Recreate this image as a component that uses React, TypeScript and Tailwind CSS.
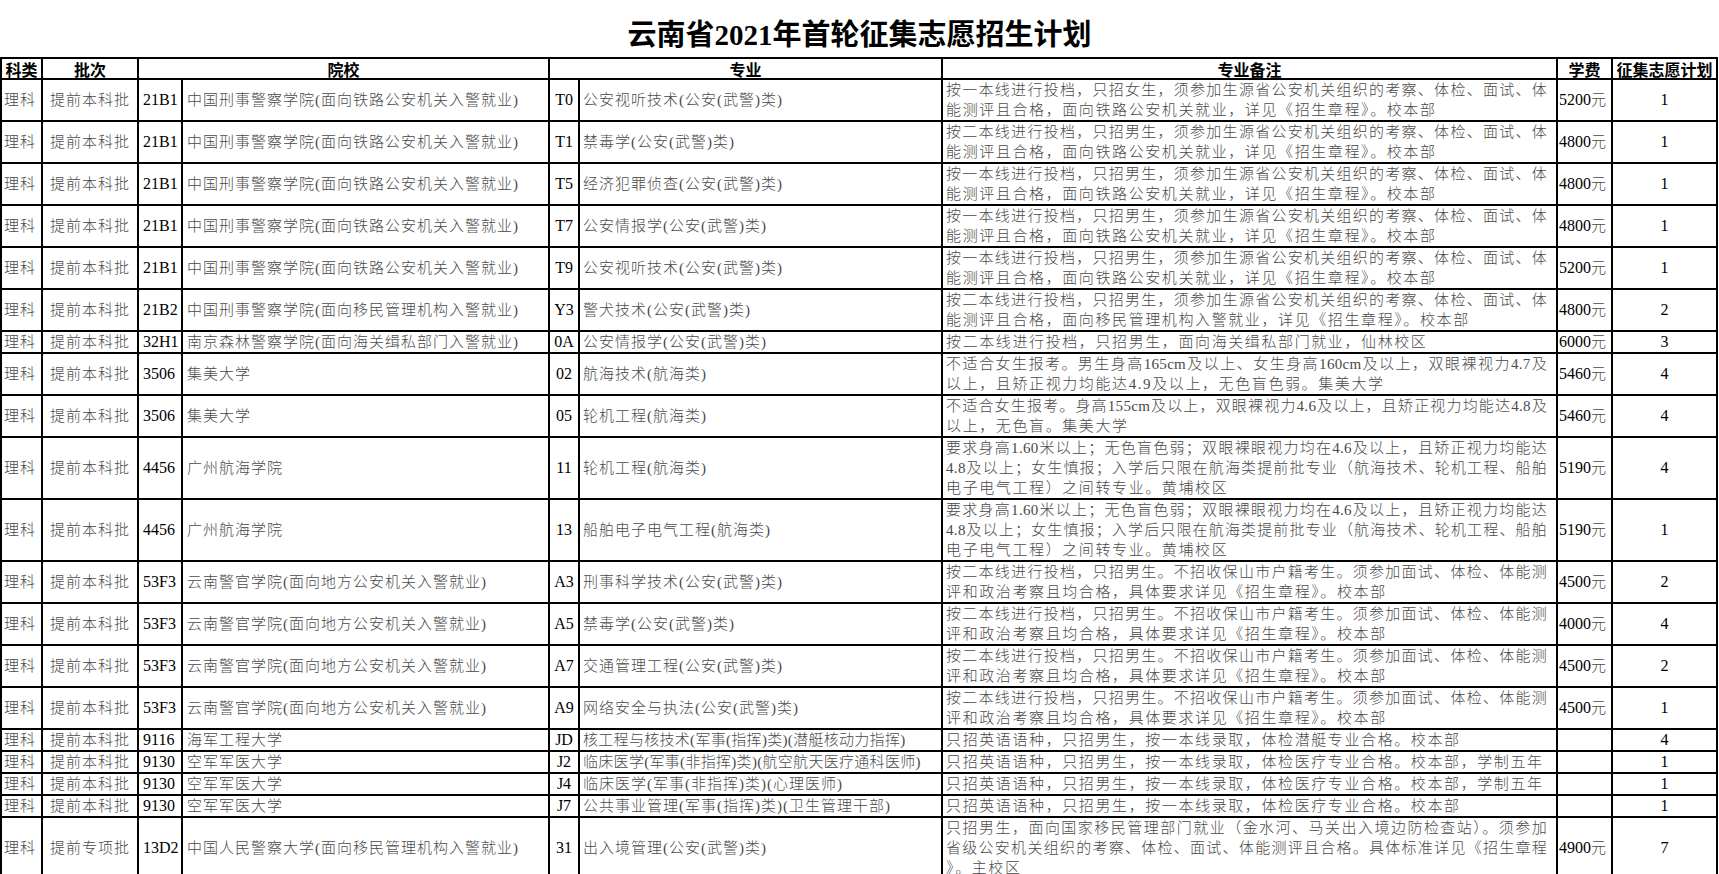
import React from "react"

type PlanRow = {
  batch: string
  code: string
  school: string
  mcode: string
  major: string
  notes: string[]
  fee: string
  plan: string
}

const N_ONE_F =
  "按一本线进行投档，只招女生，须参加生源省公安机关组织的考察、体检、面试、体"
const N_ONE_M =
  "按一本线进行投档，只招男生，须参加生源省公安机关组织的考察、体检、面试、体"
const N_TWO_M =
  "按二本线进行投档，只招男生，须参加生源省公安机关组织的考察、体检、面试、体"
const N_RAIL = "能测评且合格，面向铁路公安机关就业，详见《招生章程》。校本部"
const N_YN = [
  "按二本线进行投档，只招男生。不招收保山市户籍考生。须参加面试、体检、体能测",
  "评和政治考察且均合格，具体要求详见《招生章程》。校本部",
]
const N_GZ = [
  "要求身高1.60米以上；无色盲色弱；双眼裸眼视力均在4.6及以上，且矫正视力均能达",
  "4.8及以上；女生慎报；入学后只限在航海类提前批专业（航海技术、轮机工程、船舶",
  "电子电气工程）之间转专业。黄埔校区",
]

const CJ = "中国刑事警察学院(面向铁路公安机关入警就业)"
const YN = "云南警官学院(面向地方公安机关入警就业)"

const ROWS: PlanRow[] = [
  { batch: "提前本科批", code: "21B1", school: CJ, mcode: "T0", major: "公安视听技术(公安(武警)类)", notes: [N_ONE_F, N_RAIL], fee: "5200", plan: "1" },
  { batch: "提前本科批", code: "21B1", school: CJ, mcode: "T1", major: "禁毒学(公安(武警)类)", notes: [N_TWO_M, N_RAIL], fee: "4800", plan: "1" },
  { batch: "提前本科批", code: "21B1", school: CJ, mcode: "T5", major: "经济犯罪侦查(公安(武警)类)", notes: [N_ONE_M, N_RAIL], fee: "4800", plan: "1" },
  { batch: "提前本科批", code: "21B1", school: CJ, mcode: "T7", major: "公安情报学(公安(武警)类)", notes: [N_ONE_M, N_RAIL], fee: "4800", plan: "1" },
  { batch: "提前本科批", code: "21B1", school: CJ, mcode: "T9", major: "公安视听技术(公安(武警)类)", notes: [N_ONE_M, N_RAIL], fee: "5200", plan: "1" },
  {
    batch: "提前本科批", code: "21B2", school: "中国刑事警察学院(面向移民管理机构入警就业)", mcode: "Y3", major: "警犬技术(公安(武警)类)",
    notes: [N_TWO_M, "能测评且合格，面向移民管理机构入警就业，详见《招生章程》。校本部"], fee: "4800", plan: "2",
  },
  {
    batch: "提前本科批", code: "32H1", school: "南京森林警察学院(面向海关缉私部门入警就业)", mcode: "0A", major: "公安情报学(公安(武警)类)",
    notes: ["按二本线进行投档，只招男生，面向海关缉私部门就业，仙林校区"], fee: "6000", plan: "3",
  },
  {
    batch: "提前本科批", code: "3506", school: "集美大学", mcode: "02", major: "航海技术(航海类)",
    notes: [
      "不适合女生报考。男生身高165cm及以上、女生身高160cm及以上，双眼裸视力4.7及",
      "以上，且矫正视力均能达4.9及以上，无色盲色弱。集美大学",
    ],
    fee: "5460", plan: "4",
  },
  {
    batch: "提前本科批", code: "3506", school: "集美大学", mcode: "05", major: "轮机工程(航海类)",
    notes: ["不适合女生报考。身高155cm及以上，双眼裸视力4.6及以上，且矫正视力均能达4.8及", "以上，无色盲。集美大学"],
    fee: "5460", plan: "4",
  },
  { batch: "提前本科批", code: "4456", school: "广州航海学院", mcode: "11", major: "轮机工程(航海类)", notes: N_GZ, fee: "5190", plan: "4" },
  { batch: "提前本科批", code: "4456", school: "广州航海学院", mcode: "13", major: "船舶电子电气工程(航海类)", notes: N_GZ, fee: "5190", plan: "1" },
  { batch: "提前本科批", code: "53F3", school: YN, mcode: "A3", major: "刑事科学技术(公安(武警)类)", notes: N_YN, fee: "4500", plan: "2" },
  { batch: "提前本科批", code: "53F3", school: YN, mcode: "A5", major: "禁毒学(公安(武警)类)", notes: N_YN, fee: "4000", plan: "4" },
  { batch: "提前本科批", code: "53F3", school: YN, mcode: "A7", major: "交通管理工程(公安(武警)类)", notes: N_YN, fee: "4500", plan: "2" },
  { batch: "提前本科批", code: "53F3", school: YN, mcode: "A9", major: "网络安全与执法(公安(武警)类)", notes: N_YN, fee: "4500", plan: "1" },
  {
    batch: "提前本科批", code: "9116", school: "海军工程大学", mcode: "JD", major: "核工程与核技术(军事(指挥)类)(潜艇核动力指挥)",
    notes: ["只招英语语种，只招男生，按一本线录取，体检潜艇专业合格。校本部"], fee: "", plan: "4",
  },
  {
    batch: "提前本科批", code: "9130", school: "空军军医大学", mcode: "J2", major: "临床医学(军事(非指挥)类)(航空航天医疗通科医师)",
    notes: ["只招英语语种，只招男生，按一本线录取，体检医疗专业合格。校本部，学制五年"], fee: "", plan: "1",
  },
  {
    batch: "提前本科批", code: "9130", school: "空军军医大学", mcode: "J4", major: "临床医学(军事(非指挥)类)(心理医师)",
    notes: ["只招英语语种，只招男生，按一本线录取，体检医疗专业合格。校本部，学制五年"], fee: "", plan: "1",
  },
  {
    batch: "提前本科批", code: "9130", school: "空军军医大学", mcode: "J7", major: "公共事业管理(军事(指挥)类)(卫生管理干部)",
    notes: ["只招英语语种，只招男生，按一本线录取，体检医疗专业合格。校本部"], fee: "", plan: "1",
  },
  {
    batch: "提前专项批", code: "13D2", school: "中国人民警察大学(面向移民管理机构入警就业)", mcode: "31", major: "出入境管理(公安(武警)类)",
    notes: [
      "只招男生，面向国家移民管理部门就业（金水河、马关出入境边防检查站）。须参加",
      "省级公安机关组织的考察、体检、面试、体能测评且合格。具体标准详见《招生章程",
      "》。主校区",
    ],
    fee: "4900", plan: "7",
  },
]

const ROW_H = ["h-[21px]", "h-[21px]", "h-[42px]", "h-[62px]"]

const cell = "border-2 border-black whitespace-nowrap overflow-hidden"
const head = "border-2 border-black text-center font-['Noto_Sans_CJK_SC',sans-serif] font-bold text-[16px] leading-[18px] text-black"

export default function App() {
  return (
    <div className="w-[1719px] bg-white font-['Liberation_Serif','Noto_Sans_CJK_SC',serif] text-[#4a4a4a]">
      <div className="h-[57px] pt-[19px] text-center text-[29px] leading-[32px] font-bold text-black">
        云南省2021年首轮征集志愿招生计划
      </div>
      <table className="table-fixed border-collapse w-[1716px] border-2 border-black">
        <colgroup>
          <col className="w-[41px]" />
          <col className="w-[96px]" />
          <col className="w-[44px]" />
          <col className="w-[367px]" />
          <col className="w-[30px]" />
          <col className="w-[363px]" />
          <col className="w-[615px]" />
          <col className="w-[55px]" />
          <col className="w-[105px]" />
        </colgroup>
        <thead>
          <tr className="h-[21px]">
            <th className={head}>科类</th>
            <th className={head}>批次</th>
            <th className={head} colSpan={2}>院校</th>
            <th className={head} colSpan={2}>专业</th>
            <th className={head}>专业备注</th>
            <th className={head}>学费</th>
            <th className={head}>征集志愿计划</th>
          </tr>
        </thead>
        <tbody className="text-[15px] leading-[20px] font-light">
          {ROWS.map((r, i) => (
            <tr key={i} className={ROW_H[r.notes.length]}>
              <td className={`${cell} pl-[2px] tracking-[1px]`}>理科</td>
              <td className={`${cell} text-center tracking-[1px]`}>{r.batch}</td>
              <td className={`${cell} pl-[4px] text-[16px] text-black font-normal`}>{r.code}</td>
              <td className={`${cell} pl-[4px] tracking-[1px]`}>{r.school}</td>
              <td className={`${cell} text-center text-[16px] text-black font-normal`}>{r.mcode}</td>
              <td className={`${cell} pl-[3px] ${r.major.length > 24 ? "tracking-[0.3px]" : "tracking-[1px]"}`}>{r.major}</td>
              <td className={`${cell} pl-[3px] pr-[9px]`}>
                {r.notes.map((line, j) =>
                  j < r.notes.length - 1 ? (
                    <div key={j} className="text-justify [text-align-last:justify] tracking-[0.3px]">
                      {line}
                    </div>
                  ) : (
                    <div key={j} className="tracking-[1.6px]">
                      {line}
                    </div>
                  )
                )}
              </td>
              <td className={`${cell} pl-[1px]`}>
                {r.fee && (
                  <>
                    <span className="text-[16px] text-black font-normal">{r.fee}</span>元
                  </>
                )}
              </td>
              <td className={`${cell} text-center text-[16px] text-black font-normal`}>{r.plan}</td>
            </tr>
          ))}
        </tbody>
      </table>
    </div>
  )
}
